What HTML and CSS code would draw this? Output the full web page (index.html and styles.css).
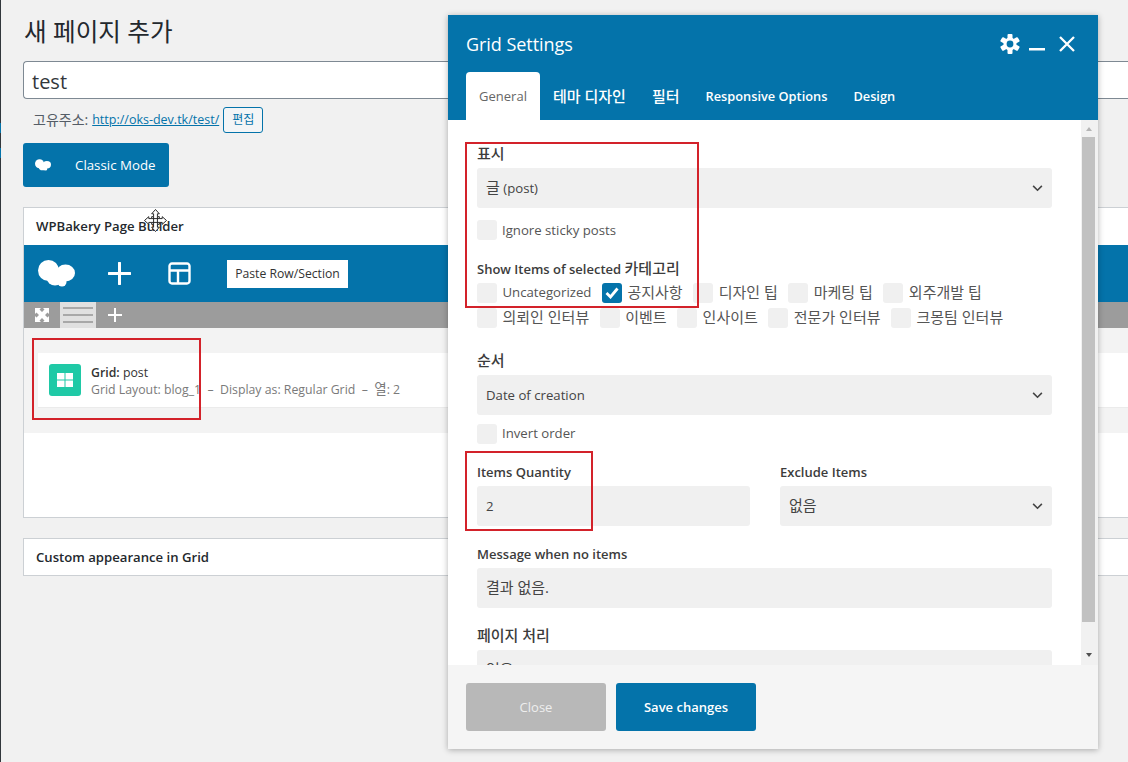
FILE: index.html
```html
<!DOCTYPE html>
<html lang="ko">
<head>
<meta charset="utf-8">
<title>새 페이지 추가</title>
<link rel="stylesheet" href="styles.css">
</head>
<body>
<div class="edge"><i class="edge-dot"></i><i class="edge-dot"></i></div>
<main class="page">
  <h1 class="title">새 페이지 추가</h1>
  <div class="title-input">test</div>
  <div class="permalink">
    <span class="ko-link">고유주소:</span>
    <a class="plink" href="#">http://oks-dev.tk/test/</a>
    <span class="edit-btn">편집</span>
  </div>
  <div class="classic-btn">
    <svg class="cloud-sm" viewBox="0 0 37 27"><g fill="#fff"><ellipse cx="10.500" cy="10.500" rx="10.500" ry="10.500"/><ellipse cx="27.500" cy="13" rx="9.500" ry="8.500"/><ellipse cx="17" cy="19" rx="8" ry="6.500"/><ellipse cx="24" cy="22" rx="4.500" ry="4.500"/></g></svg>
    <span>Classic Mode</span>
  </div>
  <section class="panel">
    <div class="panel-head">WPBakery Page Builder</div>
    <div class="vc-nav">
      <svg class="cloud-lg" viewBox="0 0 37 27"><g fill="#fff"><ellipse cx="10.500" cy="10.500" rx="10.500" ry="10.500"/><ellipse cx="27.500" cy="13" rx="9.500" ry="8.500"/><ellipse cx="17" cy="19" rx="8" ry="6.500"/><ellipse cx="24" cy="22" rx="4.500" ry="4.500"/></g></svg>
      <svg class="nav-plus" viewBox="0 0 23 23"><path d="M11.500 1v21M1 11.500h21" stroke="#fff" stroke-width="3" stroke-linecap="round"/></svg>
      <svg class="nav-tpl" viewBox="0 0 23 23"><path fill="none" stroke="#fff" stroke-width="2.400" d="M4 1.500h15a2.500 2.500 0 0 1 2.500 2.500v15a2.500 2.500 0 0 1-2.500 2.500H4A2.500 2.500 0 0 1 1.500 19V4A2.500 2.500 0 0 1 4 1.500zM1.500 8.500h20M10 8.500v13"/></svg>
      <span class="paste">Paste Row/Section</span>
    </div>
    <div class="vc-sub">
      <svg class="sub-expand" viewBox="0 0 14 14"><path fill="#fff" d="M0 0h6L4.500 1.500 7 4l2.500-2.500L8 0h6v6l-1.500-1.500L10 7l2.500 2.500L14 8v6H8l1.500-1.500L7 10l-2.500 2.500L6 14H0V8l1.500 1.500L4 7 1.500 4.500 0 6z"/></svg>
      <span class="sub-active"><i></i><i></i><i></i></span>
      <svg class="sub-plus" viewBox="0 0 14 14"><path d="M7 0v14M0 7h14" stroke="#fff" stroke-width="2"/></svg>
    </div>
    <div class="vc-area">
      <div class="el-row">
        <span class="el-icon"><svg viewBox="0 0 16 14"><path fill="#fff" d="M0 0h7.500v6.500H0zM8.500 0H16v6.500H8.500zM0 7.500h7.500V14H0zM8.500 7.500H16V14H8.500z"/></svg></span>
        <div class="el-text">
          <div class="el-name"><b>Grid:</b> post</div>
          <div class="el-meta">Grid Layout: blog_1&nbsp; –&nbsp; Display as: Regular Grid &nbsp;–&nbsp; <span class="ko-meta">열</span>: 2</div>
        </div>
      </div>
    </div>
  </section>
  <section class="panel panel-small">
    <div class="panel-head">Custom appearance in Grid</div>
  </section>
</main>

<svg class="cursor" viewBox="0 0 24 24"><path fill="#fff" stroke="#222" stroke-width="1" d="M12 .5L16 5h-2v3h2v2h3V8l4.500 4-4.500 4v-2h-3v2h-2v3h2l-4 4.500L8 19h2v-3H8v-2H5v2L.5 12 5 8v2h3V8h2V5H8z"/><path fill="none" stroke="#222" stroke-width="1" d="M10 8v8M14 8v8M8 10h8M8 14h8"/></svg>

<div class="modal">
  <header class="m-head">
    <div class="m-top">
      <span class="m-title">Grid Settings</span>
      <span class="m-icons">
        <svg class="m-gear" viewBox="0 0 20 20"><g fill="#fff"><rect x="7.500" y="0" width="5" height="20" rx="1"/><rect x="7.500" y="0" width="5" height="20" rx="1" transform="rotate(60 10 10)"/><rect x="7.500" y="0" width="5" height="20" rx="1" transform="rotate(120 10 10)"/></g><circle cx="10" cy="10" r="6.500" fill="#fff"/><circle cx="10" cy="10" r="3.400" fill="#0473aa"/></svg>
        <svg class="m-min" viewBox="0 0 16 3"><path fill="#fff" d="M0 0h16v2.500H0z"/></svg>
        <svg class="m-close" viewBox="0 0 16 16"><path d="M1 1l14 14M15 1L1 15" stroke="#fff" stroke-width="2.300"/></svg>
      </span>
    </div>
    <nav class="tabs">
      <span class="tab tab-on">General</span>
      <span class="tab ko-tab">테마 디자인</span>
      <span class="tab ko-tab">필터</span>
      <span class="tab">Responsive Options</span>
      <span class="tab">Design</span>
    </nav>
  </header>
  <div class="m-body">
    <div class="m-scroll">
      <div class="m-content">
        <label class="lab lab-first"><span class="ko">표시</span></label>
        <div class="field sel"><span class="ko">글</span> (post)<svg class="chev" viewBox="0 0 12 8"><path fill="none" stroke="#444" stroke-width="1.800" d="M1 1l5 5 5-5"/></svg></div>
        <div class="check-line single"><i class="cb"></i><span>Ignore sticky posts</span></div>
        <label class="lab lab-cats">Show Items of selected <span class="ko">카테고리</span></label>
        <div class="cats">
          <span class="cat"><i class="cb"></i><span class="cat-t">Uncategorized</span></span>
          <span class="cat"><i class="cb cb-on"><svg viewBox="0 0 14 12"><path fill="none" stroke="#fff" stroke-width="2.800" d="M1.500 6l4 4 7-8.500"/></svg></i><span class="ko cat-t">공지사항</span></span>
          <span class="cat"><i class="cb"></i><span class="ko cat-t">디자인 팁</span></span>
          <span class="cat"><i class="cb"></i><span class="ko cat-t">마케팅 팁</span></span>
          <span class="cat"><i class="cb"></i><span class="ko cat-t">외주개발 팁</span></span>
        </div>
        <div class="cats cats-2">
          <span class="cat"><i class="cb"></i><span class="ko cat-t">의뢰인 인터뷰</span></span>
          <span class="cat"><i class="cb"></i><span class="ko cat-t">이벤트</span></span>
          <span class="cat"><i class="cb"></i><span class="ko cat-t">인사이트</span></span>
          <span class="cat"><i class="cb"></i><span class="ko cat-t">전문가 인터뷰</span></span>
          <span class="cat"><i class="cb"></i><span class="ko cat-t">크몽팀 인터뷰</span></span>
        </div>
        <label class="lab lab-order"><span class="ko">순서</span></label>
        <div class="field sel">Date of creation<svg class="chev" viewBox="0 0 12 8"><path fill="none" stroke="#444" stroke-width="1.800" d="M1 1l5 5 5-5"/></svg></div>
        <div class="check-line"><i class="cb"></i><span class="cat-t">Invert order</span></div>
        <div class="two">
          <div>
            <label class="lab">Items Quantity</label>
            <div class="field">2</div>
          </div>
          <div>
            <label class="lab">Exclude Items</label>
            <div class="field sel"><span class="ko">없음</span><svg class="chev" viewBox="0 0 12 8"><path fill="none" stroke="#444" stroke-width="1.800" d="M1 1l5 5 5-5"/></svg></div>
          </div>
        </div>
        <label class="lab lab-msg">Message when no items</label>
        <div class="field"><span class="ko">결과 없음.</span></div>
        <label class="lab lab-pag"><span class="ko">페이지 처리</span></label>
        <div class="field sel"><span class="ko">없음</span></div>
      </div>
      <div class="sbar">
        <span class="sb-up"></span>
        <span class="sb-thumb"></span>
        <span class="sb-down"></span>
      </div>
    </div>
  </div>
  <footer class="m-foot">
    <span class="btn btn-close">Close</span>
    <span class="btn btn-save">Save changes</span>
  </footer>
</div>

<div class="mark mark-1"></div>
<div class="mark mark-2"></div>
<div class="mark mark-3"></div>
</body>
</html>
```

FILE: styles.css
```css
* { box-sizing: border-box; }
html, body { margin: 0; height: 762px; overflow: hidden; }
body {
  background: #f1f1f1;
  color: #23282d;
  font-family: "Open Sans", "Noto Sans CJK KR", sans-serif;
  font-size: 13px;
  position: relative;
}
.edge {
  position: absolute; left: 0; top: 0; width: 1px; height: 762px;
  background: #32373c;
  display: flex; flex-direction: column; gap: 15px; padding-top: 123px;
}
.edge-dot { display: block; width: 1px; height: 10px; background: #0473aa; }
.ko { font-size: 15px; line-height: 1; }
.lab .ko { font-weight: 500; }
.cat-t { padding-bottom: 2px; }

.page { padding: 0 0 0 23px; }
.title {
  margin: 0; padding-left: 1px; height: 61px; padding-top: 16px;
  font-size: 24.6px; font-weight: 400; line-height: 32px;
}
.title-input {
  height: 38px; margin-right: -1px;
  background: #fff; border: 1px solid #7e8993; border-right: 0;
  border-radius: 4px 0 0 4px;
  font-size: 20px; line-height: 39px; padding-left: 8px; color: #32373c;
}
.permalink {
  display: flex; align-items: center; gap: 4px;
  height: 26px; margin-top: 8px; padding-left: 10px;
  font-size: 13px; color: #555d66;
}
.ko-link { font-size: 14px; padding-bottom: 3px; }
.plink { color: #0473aa; font-size: 12.5px; padding-bottom: 2px; }
.edit-btn {
  height: 26px; width: 40px; border: 1px solid #0473aa; border-radius: 3px;
  font-size: 12px; line-height: 24px; text-align: center; color: #0473aa; background: #f3f5f6;
}
.classic-btn {
  display: flex; align-items: center;
  width: 146px; height: 44px; margin-top: 10px; padding-left: 12px;
  background: #0473aa; color: #fff; border-radius: 3px;
  font-size: 13.3px;
}
.cloud-sm { width: 16px; height: 12px; margin-right: 24px; }
.panel {
  margin-top: 20px; height: 311px;
  background: #fff; border: 1px solid #ccd0d4; border-right: 0;
}
.panel-small { height: 38px; }
.panel-head {
  height: 37px; padding-left: 12px;
  font-size: 13.15px; font-weight: 600; line-height: 37px; color: #23282d;
}
.vc-nav {
  display: flex; align-items: center;
  height: 57px; background: #0473aa; padding-left: 14px;
}
.cloud-lg { width: 37px; height: 27px; margin-right: 33px; }
.nav-plus { width: 23px; height: 23px; margin-right: 37px; }
.nav-tpl { width: 23px; height: 23px; margin-right: 36px; }
.paste {
  display: block; width: 121px; height: 28px; background: #fff;
  font-size: 12.2px; line-height: 28px; text-align: center; color: #333;
}
.vc-sub {
  display: flex; align-items: stretch;
  height: 26px; background: #9c9c9c; padding-left: 11px;
}
.sub-expand { width: 14px; height: 14px; align-self: center; margin-right: 11px; }
.sub-active {
  width: 36px; background: #e0e0e0; display: flex; flex-direction: column;
  justify-content: center; gap: 5px; padding: 0 3px;
}
.sub-active i { display: block; height: 2px; background: #a8a8a8; }
.sub-plus { width: 14px; height: 14px; align-self: center; margin-left: 12px; }
.vc-area { height: 105px; background: #f3f3f3; padding: 25px 0 0 14px; }
.el-row {
  display: flex; align-items: center; height: 55px;
  background: #fff; border-bottom: 1px solid #ebebeb; padding-left: 11px;
}
.el-icon {
  display: flex; align-items: center; justify-content: center;
  width: 32px; height: 32px; background: #1fc9a6; border-radius: 3px; margin-right: 10px;
}
.el-icon svg { width: 16px; height: 14px; }
.el-text { padding-top: 2px; }
.el-name { font-size: 12.3px; line-height: 17px; color: #333; }
.el-name b { font-weight: 600; }
.el-meta { font-size: 12.3px; line-height: 17px; color: #7a7a7a; }
.ko-meta { font-size: 13.5px; line-height: 1; }

.cursor { position: absolute; left: 144px; top: 209px; width: 23px; height: 23px; }

.modal {
  position: absolute; left: 448px; top: 15px; width: 650px; height: 734px;
  background: #fff; box-shadow: 0 1px 6px rgba(0,0,0,.3);
  display: flex; flex-direction: column;
}
.m-head { height: 105px; background: #0473aa; padding: 0 18px; flex: none; }
.m-top { display: flex; justify-content: space-between; align-items: center; height: 57px; }
.m-title { color: #fff; font-size: 18px; font-weight: 400; letter-spacing: -.05px; }
.m-icons { display: flex; align-items: center; padding-right: 5px; }
.m-gear { width: 20px; height: 20px; margin-right: 9px; }
.m-min { width: 16px; height: 3px; margin-top: 12px; margin-right: 14px; }
.m-close { width: 16px; height: 16px; }
.tabs { display: flex; height: 48px; }
.tab { color: #fff; font-size: 12.8px; font-weight: 600; line-height: 48px; margin-right: 26px; white-space: nowrap; }
.ko-tab { font-size: 15px; font-weight: 500; }
.tab-on {
  width: 74px; margin-right: 13px; text-align: center; font-size: 13px;
  background: #fff; color: #666; font-weight: 400; border-radius: 4px 4px 0 0;
}
.m-body { flex: 1; min-height: 0; overflow: hidden; }
.m-scroll { display: flex; height: 545px; overflow: hidden; }
.m-content { flex: 1; padding: 0 29px 0 29px; overflow: hidden; }
.lab { display: block; font-size: 13px; font-weight: 600; color: #3c3c3c; line-height: 18px; margin-bottom: 5px; }
.lab-first { margin-top: 25px; margin-bottom: 5px; }
.lab-cats { margin-top: 20px; margin-bottom: 5px; }
.lab-order { margin-top: 24px; margin-bottom: 5px; }
.lab-msg { margin-top: 19px; }
.lab-pag { margin-top: 19px; margin-bottom: 5px; }
.field {
  position: relative; height: 40px; background: #f0f0f0; border-radius: 3px;
  padding-left: 9px; line-height: 40px; font-size: 13.2px; color: #444;
}
.chev { position: absolute; right: 9px; top: 17px; width: 11px; height: 7px; }
.check-line { display: flex; align-items: center; gap: 5px; height: 20px; margin-top: 9px; color: #555; font-size: 13.2px; }
.check-line.single { margin-top: 12px; }
.cb { display: block; flex: none; width: 20px; height: 20px; background: #f0f0f0; border-radius: 3px; }
.cb-on { background: #0473aa; display: flex; align-items: center; justify-content: center; }
.cb-on svg { width: 14px; height: 12px; }
.cats { display: flex; height: 20px; gap: 10.5px; }
.cats-2 { margin-top: 5px; }
.cat { display: flex; align-items: center; gap: 5.5px; color: #555; white-space: nowrap; font-size: 13.2px; }
.two { display: grid; grid-template-columns: 273px 272px; column-gap: 30px; margin-top: 19px; }
.sbar { flex: none; width: 17px; display: flex; flex-direction: column; align-items: center; background: #f1f1f1; }
.sb-up { width: 0; height: 0; margin: 7px 0 6px; border: 3.5px solid transparent; border-top: 0; border-bottom: 4px solid #b5b5b5; }
.sb-thumb { width: 13px; height: 485px; background: #c1c1c1; margin-right: 2px; flex: none; }
.sb-up, .sb-down { margin-right: 2px; }
.sb-down { width: 0; height: 0; margin-top: 31px; border: 3.5px solid transparent; border-bottom: 0; border-top: 4px solid #505050; }
.m-foot {
  display: flex; gap: 10px; height: 84px; flex: none; padding: 18px 18px 0;
  background: #f5f5f5;
}
.btn {
  width: 140px; height: 48px; border-radius: 3px; color: #fff; font-size: 13px; font-weight: 600;
  line-height: 48px; text-align: center;
}
.btn-close { background: #b8b8b8; font-weight: 400; color: #eee; }
.btn-save { background: #0473aa; }

.mark { position: absolute; border: 2px solid #d3222a; pointer-events: none; }
.mark-1 { left: 465px; top: 142px; width: 234px; height: 166px; }
.mark-2 { left: 32px; top: 338px; width: 169px; height: 82px; }
.mark-3 { left: 465px; top: 451px; width: 128px; height: 80px; }
```
